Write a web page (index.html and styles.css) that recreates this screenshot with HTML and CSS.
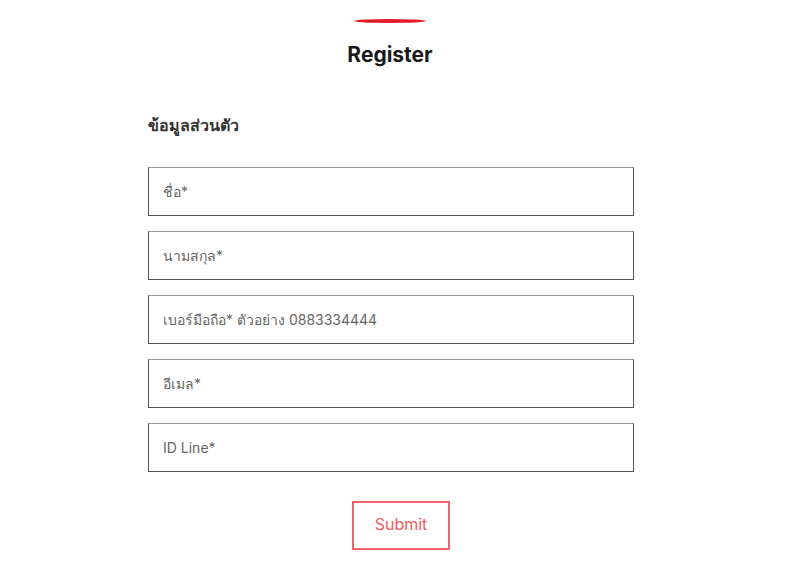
FILE: index.html
```html
<!DOCTYPE html>
<html lang="th">
<head>
    <meta charset="UTF-8">
    <meta name="viewport" content="width=device-width, initial-scale=1.0">
    <title>Register</title>
    <link rel="stylesheet" href="styles.css">
</head>
<body>

<header class="page-title">
    <span class="title-bar"></span>
    <h1>Register</h1>
</header>

<main class="register">
    <h2>ข้อมูลส่วนตัว</h2>
    <form id="registerForm" class="register-form">
        <input type="text" placeholder="ชื่อ*">
        <input type="text" placeholder="นามสกุล*">
        <input type="tel" placeholder="เบอร์มือถือ* ตัวอย่าง 0883334444">
        <input type="email" placeholder="อีเมล*">
        <input type="text" placeholder="ID Line*">
        <div class="actions">
            <button type="submit">Submit</button>
        </div>
    </form>
</main>

</body>
</html>
```

FILE: styles.css
```css
body {
    font-family: Inter, "Noto Sans", "DejaVu Sans", sans-serif;
    background-color: #fff;
    color: #222;
    margin: 0;
    padding: 0;
}
.page-title {
    display: flex;
    flex-direction: column;
    align-items: center;
    padding: 19px 20px 0 0;
}
.title-bar {
    display: block;
    width: 72px;
    height: 4px;
    border-radius: 50%;
    background-color: #e41b25;
}
.page-title h1 {
    margin: 19px 0 0;
    font-size: 21px;
    font-weight: 700;
    color: #1a1a1a;
}
.register {
    width: 486px;
    margin-left: 148px;
    padding-top: 46px;
}
.register h2 {
    margin: 0 0 29px;
    font-size: 16px;
    font-weight: 700;
    color: #333;
}
.register-form {
    display: flex;
    flex-direction: column;
    gap: 15px;
}
.register-form input {
    box-sizing: border-box;
    height: 49px;
    padding: 0 14px;
    border: 1px solid #555;
    border-top-color: #999;
    font-family: inherit;
    font-size: 14px;
    color: #333;
    outline: none;
}
.register-form input::placeholder {
    color: #666;
}
.actions {
    display: flex;
    justify-content: center;
    padding: 14px 0 0 20px;
}
.actions button {
    width: 98px;
    height: 49px;
    padding: 0 0 4px;
    background-color: #fff;
    border: 2px solid #f0636b;
    color: #ef5a63;
    font-family: inherit;
    font-size: 16px;
    cursor: pointer;
}
```
